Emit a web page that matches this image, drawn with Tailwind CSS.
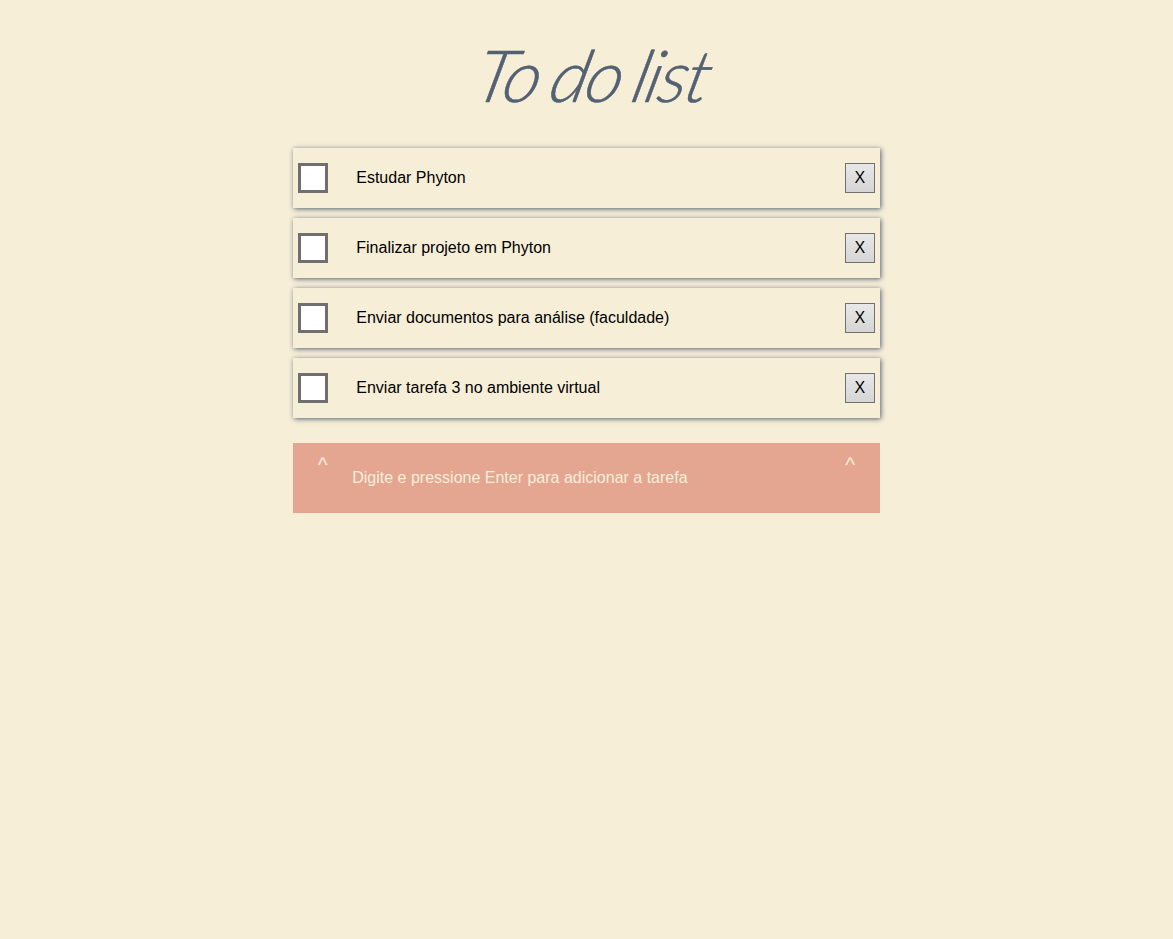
<!DOCTYPE html>
<html lang="pt-BR">
<head>
<meta charset="utf-8">
<title>To do list</title>
<script src="https://cdn.jsdelivr.net/npm/@tailwindcss/browser@4"></script>
</head>
<body class="min-h-screen bg-[#f7eed8] font-['Liberation_Sans',Arial,sans-serif] text-base text-black">
<main class="mx-auto w-1/2">
  <h1 class="flex h-[148px] items-center justify-center pb-px pl-[16px] font-['Lato',cursive] text-[72px] leading-none font-light italic tracking-[-2px] whitespace-nowrap text-[#536172]"><span class="inline-block -skew-x-14 [word-spacing:-4px] [-webkit-text-stroke:0.5px_#536172]">To do list</span></h1>
  <ul class="flex flex-col gap-2.5">
    <li class="flex h-[60px] items-center px-[5px] shadow-[1px_1px_5px_#536172]">
      <span class="size-[30px] border-3 border-[#6f6f6f] bg-white"></span>
      <span class="ml-7 grow pb-px">Estudar Phyton</span>
      <button class="size-[30px] border border-[#707070] bg-linear-to-b from-[#e8e8e8] to-[#d5d5d5] pb-px">X</button>
    </li>
    <li class="flex h-[60px] items-center px-[5px] shadow-[1px_1px_5px_#536172]">
      <span class="size-[30px] border-3 border-[#6f6f6f] bg-white"></span>
      <span class="ml-7 grow pb-px">Finalizar projeto em Phyton</span>
      <button class="size-[30px] border border-[#707070] bg-linear-to-b from-[#e8e8e8] to-[#d5d5d5] pb-px">X</button>
    </li>
    <li class="flex h-[60px] items-center px-[5px] shadow-[1px_1px_5px_#536172]">
      <span class="size-[30px] border-3 border-[#6f6f6f] bg-white"></span>
      <span class="ml-7 grow pb-px">Enviar documentos para análise (faculdade)</span>
      <button class="size-[30px] border border-[#707070] bg-linear-to-b from-[#e8e8e8] to-[#d5d5d5] pb-px">X</button>
    </li>
    <li class="flex h-[60px] items-center px-[5px] shadow-[1px_1px_5px_#536172]">
      <span class="size-[30px] border-3 border-[#6f6f6f] bg-white"></span>
      <span class="ml-7 grow pb-px">Enviar tarefa 3 no ambiente virtual</span>
      <button class="size-[30px] border border-[#707070] bg-linear-to-b from-[#e8e8e8] to-[#d5d5d5] pb-px">X</button>
    </li>
  </ul>
  <div class="mt-[25px] flex h-[70px] bg-[#e4a691] text-[#f7eed8]">
    <span class="w-[59px] pt-[11px] text-center text-[21px] leading-none">^</span>
    <span class="grow self-center pb-px">Digite e pressione Enter para adicionar a tarefa</span>
    <span class="w-[59px] pt-[11px] text-center text-[21px] leading-none">^</span>
  </div>
</main>
</body>
</html>
